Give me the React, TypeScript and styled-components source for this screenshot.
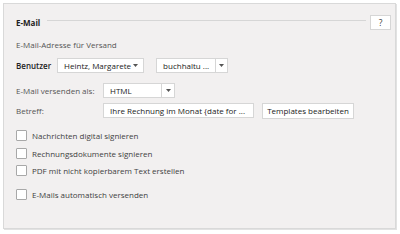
import styled, { createGlobalStyle } from "styled-components";

const GlobalStyle = createGlobalStyle`
	html, body {
		margin: 0;
		padding: 0;
		background: #ffffff;
	}
	body {
		font-family: "Open Sans", "Noto Sans", sans-serif;
		font-size: 8px;
		color: #444;
	}
`;

const Page = styled.div`
	padding: 3px 4px 3px 3px;
`;

const Panel = styled.section`
	background: #f2f0f0;
	border: 1px solid #d9d9d9;
	box-shadow: 1px 1px 0 #e2e2e2;
	height: 226px;
	box-sizing: border-box;
	padding: 11px 4px 0 12px;
	display: flex;
	flex-direction: column;
`;

const TitleRow = styled.div`
	display: flex;
	align-items: center;
	height: 15px;
`;

const Title = styled.h2`
	margin: 0;
	font-size: 8px;
	font-weight: 700;
	color: #222;
`;

const Rule = styled.div`
	flex: 1;
	height: 1px;
	background: #d6d6d6;
	margin: 0 4px 4px 7px;
	align-self: center;
`;

const HelpButton = styled.button`
	width: 21px;
	height: 15px;
	padding: 0;
	border: 1px solid #d6d6d6;
	background: #fff;
	font: inherit;
	font-size: 8.5px;
	color: #333;
`;

const Caption = styled.div`
	margin-top: 9px;
	line-height: 12px;
	color: #555;
`;

const Row = styled.div<{ $top: number }>`
	display: flex;
	align-items: center;
	height: 15px;
	margin-top: ${(p) => p.$top}px;
`;

const FieldLabel = styled.span<{ $width?: number; $bold?: boolean }>`
	width: ${(p) => (p.$width ? `${p.$width}px` : "auto")};
	flex: none;
	color: ${(p) => (p.$bold ? "#222" : "#555")};
	font-weight: ${(p) => (p.$bold ? 600 : 400)};
	margin-right: ${(p) => (p.$bold ? 6 : 0)}px;
`;

const Box = styled.div<{ $width: number }>`
	width: ${(p) => p.$width}px;
	height: 15px;
	box-sizing: border-box;
	background: #fff;
	border: 1px solid #d6d6d6;
	display: flex;
	align-items: center;
	padding: 0 5px 0 6px;
	color: #222;
	white-space: nowrap;
	overflow: hidden;
`;

const BoxText = styled.span`
	flex: 1;
	overflow: hidden;
`;

const Combo = styled.div<{ $gap?: number }>`
	display: flex;
	margin-left: ${(p) => p.$gap ?? 0}px;
`;

const ArrowButton = styled.div<{ $width: number }>`
	width: ${(p) => p.$width}px;
	height: 15px;
	box-sizing: border-box;
	background: #fff;
	border: 1px solid #d6d6d6;
	border-left: none;
	display: flex;
	align-items: center;
	justify-content: center;
`;

const Button = styled.button`
	margin-left: 8px;
	width: 92px;
	height: 16px;
	padding: 0;
	border: 1px solid #d6d6d6;
	background: #fff;
	font: inherit;
	color: #222;
`;

const CheckRow = styled.label<{ $top: number }>`
	display: flex;
	align-items: center;
	gap: 5px;
	margin-top: ${(p) => p.$top}px;
	height: 11px;
	color: #3e3e3e;
	font-size: 8px;
`;

const CheckBox = styled.span`
	width: 11px;
	height: 11px;
	box-sizing: border-box;
	border: 1px solid #a8a8a8;
	border-radius: 1px;
	background: #fff;
	flex: none;
`;

function Caret() {
	return (
		<svg width="5" height="3" viewBox="0 0 5 3" style={{ display: "block" }}>
			<path d="M0 0h5L2.5 3z" fill="#555" />
		</svg>
	);
}

const checks: [string, number][] = [
	["Nachrichten digital signieren", 12],
	["Rechnungsdokumente signieren", 7],
	["PDF mit nicht kopierbarem Text erstellen", 6],
	["E-Mails automatisch versenden", 13],
];

export default function App() {
	return (
		<Page>
			<GlobalStyle />
			<Panel>
				<TitleRow>
					<Title>E-Mail</Title>
					<Rule />
					<HelpButton>?</HelpButton>
				</TitleRow>

				<Caption>E-Mail-Adresse für Versand</Caption>

				<Row $top={7}>
					<FieldLabel $bold>Benutzer</FieldLabel>
					<Box $width={87}>
						<BoxText>Heintz, Margarete</BoxText>
						<Caret />
					</Box>
					<Combo $gap={12}>
						<Box $width={60}>
							<BoxText>buchhaltu ...</BoxText>
						</Box>
						<ArrowButton $width={12}>
							<Caret />
						</ArrowButton>
					</Combo>
				</Row>

				<Row $top={10}>
					<FieldLabel $width={87}>E-Mail versenden als:</FieldLabel>
					<Combo>
						<Box $width={59}>
							<BoxText>HTML</BoxText>
						</Box>
						<ArrowButton $width={13}>
							<Caret />
						</ArrowButton>
					</Combo>
				</Row>

				<Row $top={5}>
					<FieldLabel $width={87}>Betreff:</FieldLabel>
					<Box $width={151}>
						<BoxText>Ihre Rechnung im Monat {"{date for ..."}</BoxText>
					</Box>
					<Button>Templates bearbeiten</Button>
				</Row>

				{checks.map(([text, top]) => (
					<CheckRow key={text} $top={top}>
						<CheckBox />
						{text}
					</CheckRow>
				))}
			</Panel>
		</Page>
	);
}
